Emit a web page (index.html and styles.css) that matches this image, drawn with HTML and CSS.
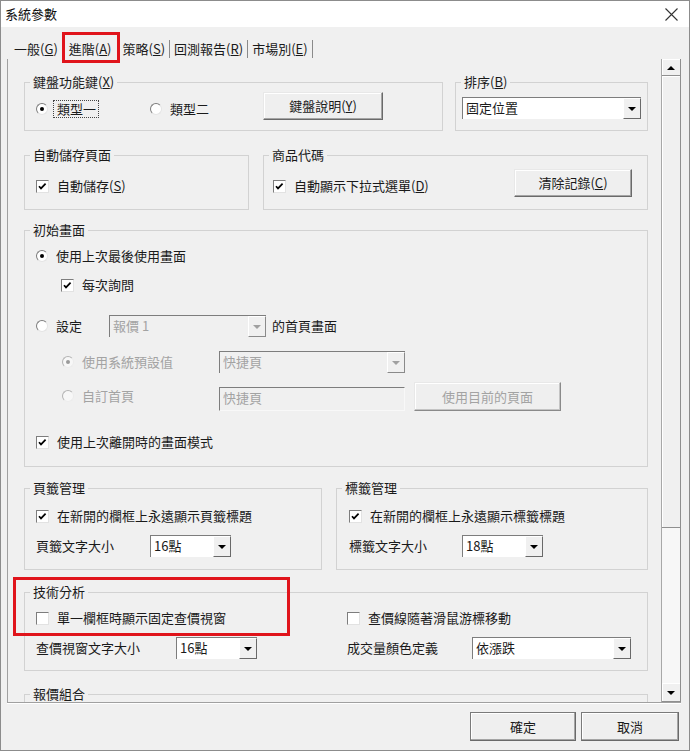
FILE: index.html
```html
<!DOCTYPE html>
<html lang="zh-Hant">
<head>
<meta charset="utf-8">
<title>系統參數</title>
<link rel="stylesheet" href="styles.css">
</head>
<body>
<div class="window">
  <div class="titlebar">
    <span class="title">系統參數</span>
    <svg class="close" width="13" height="13" viewBox="0 0 13 13"><path d="M0.5 0.5L12.5 12.5M12.5 0.5L0.5 12.5"/></svg>
  </div>

  <div class="tabs">
    <span class="tab">一般(<u>G</u>)</span>
    <span class="tab active">進階(<u>A</u>)</span>
    <span class="tab">策略(<u>S</u>)</span>
    <span class="tab">回測報告(<u>R</u>)</span>
    <span class="tab">市場別(<u>E</u>)</span>
  </div>

  <div class="pane">
    <div class="content">
      <div class="row row1">
        <div class="group g1">
          <span class="gtitle">鍵盤功能鍵(<u>X</u>)</span>
          <div class="g1-body">
            <div class="opt o-type1"><span class="rad on"></span><span class="focus">類型一</span></div>
            <div class="opt o-type2"><span class="rad"></span><span>類型二</span></div>
            <div class="btn btn-keys">鍵盤說明(<u>Y</u>)</div>
          </div>
        </div>
        <div class="group g1b">
          <span class="gtitle">排序(<u>B</u>)</span>
          <div class="combo c-sort"><span class="combo-text">固定位置</span><span class="combo-btn"><svg class="tri" width="8" height="4" viewBox="0 0 8 4"><path d="M0 0H8L4 4Z"/></svg></span></div>
        </div>
      </div>

      <div class="row row2">
        <div class="group g2a">
          <span class="gtitle">自動儲存頁面</span>
          <div class="g2a-body">
            <div class="opt"><span class="chk"><svg width="11" height="11" viewBox="0 0 11 11"><path d="M2 5.2L4 7.4L8.6 2.6"/></svg></span><span>自動儲存(<u>S</u>)</span></div>
          </div>
        </div>
        <div class="group g2b">
          <span class="gtitle">商品代碼</span>
          <div class="g2b-body">
            <div class="opt o-auto"><span class="chk"><svg width="11" height="11" viewBox="0 0 11 11"><path d="M2 5.2L4 7.4L8.6 2.6"/></svg></span><span>自動顯示下拉式選單(<u>D</u>)</span></div>
            <div class="btn btn-clear">清除記錄(<u>C</u>)</div>
          </div>
        </div>
      </div>

      <div class="group g3">
        <span class="gtitle">初始畫面</span>
        <div class="g3-body">
          <div class="opt r-a"><span class="rad on"></span><span>使用上次最後使用畫面</span></div>
          <div class="opt c-b"><span class="chk"><svg width="11" height="11" viewBox="0 0 11 11"><path d="M2 5.2L4 7.4L8.6 2.6"/></svg></span><span>每次詢問</span></div>
          <div class="line r-c">
            <div class="opt o-set"><span class="rad"></span><span>設定</span></div>
            <div class="combo dis c-quote"><span class="combo-text">報價 1</span><span class="combo-btn"><svg class="tri" width="8" height="4" viewBox="0 0 8 4"><path d="M0 0H8L4 4Z"/></svg></span></div>
            <span class="after">的首頁畫面</span>
          </div>
          <div class="line r-d">
            <div class="opt dis o-sub"><span class="rad dis on"></span><span>使用系統預設值</span></div>
            <div class="combo dis c-page"><span class="combo-text">快捷頁</span><span class="combo-btn"><svg class="tri" width="8" height="4" viewBox="0 0 8 4"><path d="M0 0H8L4 4Z"/></svg></span></div>
          </div>
          <div class="line r-e">
            <div class="opt dis o-sub o-custom"><span class="rad dis"></span><span>自訂首頁</span></div>
            <div class="input dis">快捷頁</div>
            <div class="btn dis btn-current">使用目前的頁面</div>
          </div>
          <div class="opt c-f"><span class="chk"><svg width="11" height="11" viewBox="0 0 11 11"><path d="M2 5.2L4 7.4L8.6 2.6"/></svg></span><span>使用上次離開時的畫面模式</span></div>
        </div>
      </div>

      <div class="row row4">
        <div class="group g4a">
          <span class="gtitle">頁籤管理</span>
          <div class="g4-body">
            <div class="opt c-top"><span class="chk"><svg width="11" height="11" viewBox="0 0 11 11"><path d="M2 5.2L4 7.4L8.6 2.6"/></svg></span><span>在新開的欄框上永遠顯示頁籤標題</span></div>
            <div class="line size-line">
              <span class="lbl l-size-a">頁籤文字大小</span>
              <div class="combo c-size"><span class="combo-text">16點</span><span class="combo-btn"><svg class="tri" width="8" height="4" viewBox="0 0 8 4"><path d="M0 0H8L4 4Z"/></svg></span></div>
            </div>
          </div>
        </div>
        <div class="group g4b">
          <span class="gtitle">標籤管理</span>
          <div class="g4-body g4b-body">
            <div class="opt c-top"><span class="chk"><svg width="11" height="11" viewBox="0 0 11 11"><path d="M2 5.2L4 7.4L8.6 2.6"/></svg></span><span>在新開的欄框上永遠顯示標籤標題</span></div>
            <div class="line size-line">
              <span class="lbl l-size-b">標籤文字大小</span>
              <div class="combo c-size"><span class="combo-text">18點</span><span class="combo-btn"><svg class="tri" width="8" height="4" viewBox="0 0 8 4"><path d="M0 0H8L4 4Z"/></svg></span></div>
            </div>
          </div>
        </div>
      </div>

      <div class="group g5">
        <span class="gtitle">技術分析</span>
        <div class="g5-body">
          <div class="opt"><span class="chk off"></span><span>單一欄框時顯示固定查價視窗</span></div>
          <div class="opt"><span class="chk off"></span><span>查價線隨著滑鼠游標移動</span></div>
          <div class="line g5-line">
            <span class="lbl l-tech">查價視窗文字大小</span>
            <div class="combo c-size"><span class="combo-text">16點</span><span class="combo-btn"><svg class="tri" width="8" height="4" viewBox="0 0 8 4"><path d="M0 0H8L4 4Z"/></svg></span></div>
          </div>
          <div class="line g5-line">
            <span class="lbl l-vol">成交量顏色定義</span>
            <div class="combo c-vol"><span class="combo-text">依漲跌</span><span class="combo-btn"><svg class="tri" width="8" height="4" viewBox="0 0 8 4"><path d="M0 0H8L4 4Z"/></svg></span></div>
          </div>
        </div>
      </div>

      <div class="group g6">
        <span class="gtitle">報價組合</span>
      </div>
    </div>

    <div class="scrollbar">
      <div class="sb-btn sb-up"><svg class="tri" width="8" height="4" viewBox="0 0 8 4"><path d="M0 4H8L4 0Z"/></svg></div>
      <div class="sb-thumb"></div>
      <div class="sb-track"></div>
      <div class="sb-btn sb-down"><svg class="tri" width="8" height="4" viewBox="0 0 8 4"><path d="M0 0H8L4 4Z"/></svg></div>
    </div>
  </div>

  <div class="footer">
    <div class="btn fbtn btn-ok">確定</div>
    <div class="btn fbtn btn-cancel">取消</div>
  </div>

  <div class="hl hl-tab"></div>
  <div class="hl hl-tech"></div>
</div>
</body>
</html>
```

FILE: styles.css
```css
* { box-sizing: border-box; }
html, body { margin: 0; padding: 0; }
body {
  width: 690px;
  height: 751px;
  background: #f0f0f0;
  font-family: "Noto Sans CJK TC", "Noto Sans CJK SC", "Liberation Sans", sans-serif;
  font-size: 13px;
  color: #1a1a1a;
}
u { text-decoration: underline; text-underline-offset: 1px; }

.window {
  position: relative;
  width: 690px;
  height: 751px;
  border: 1px solid #8c8c8c;
  background: #f0f0f0;
  display: flex;
  flex-direction: column;
  overflow: hidden;
}

/* title bar */
.titlebar {
  height: 26px;
  flex: none;
  background: #fff;
  display: flex;
  align-items: center;
  justify-content: space-between;
  padding: 0 11px 0 4px;
}
.title { line-height: 16px; color: #111; }
.close path { stroke: #333; stroke-width: 1.1; fill: none; }

/* tabs */
.tabs {
  height: 32px;
  flex: none;
  display: flex;
  align-items: flex-end;
  padding: 0 0 1px 9px;
}
.tab {
  height: 18px;
  line-height: 17px;
  padding: 0 4px;
  border-right: 1px solid #8a8a8a;
  white-space: nowrap;
}
.tab.active { padding: 0 6px 0 6px; }

/* pane */
.pane {
  flex: none;
  margin-left: 6px;
  width: 674px;
  height: 644px;
  display: flex;
  border-left: 1px solid #a0a0a0;
  border-bottom: 1px solid #a0a0a0;
  box-shadow: 0 1px 0 #ffffff;
}
.content {
  width: 653px;
  height: 643px;
  overflow: hidden;
  padding: 0 13px 0 16px;
}

/* groups */
.row { display: flex; }
.row1 { gap: 12px; margin-top: 23px; }
.row2 { gap: 14px; margin-top: 24px; }
.row4 { gap: 14px; margin-top: 21px; }
.group { border: 1px solid #d2d2d2; }
.gtitle {
  display: block;
  width: max-content;
  height: 16px;
  line-height: 16px;
  margin: -9px 0 0 5px;
  padding: 0 3px;
  background: #f0f0f0;
  white-space: nowrap;
}
.g1 { width: 419px; height: 49px; }
.g1b { width: 193px; height: 49px; }
.g2a { width: 225px; height: 55px; }
.g2b { width: 385px; height: 55px; }
.g3 { margin-top: 20px; height: 237px; }
.g4a { width: 298px; height: 82px; }
.g4b { width: 312px; height: 82px; }
.g5 { margin-top: 22px; height: 79px; }
.g6 { margin-top: 23px; height: 60px; }

/* option (checkbox / radio with label) */
.opt {
  display: flex;
  align-items: center;
  gap: 8px;
  height: 16px;
  line-height: 16px;
  white-space: nowrap;
}
.opt.dis { color: #a3a3a3; }

.chk {
  width: 13px;
  height: 13px;
  flex: none;
  background: #fff;
  border: 1px solid;
  border-color: #7d7d7d #e2e2e2 #e2e2e2 #7d7d7d;
  display: flex;
  align-items: center;
  justify-content: center;
}
.chk path { fill: none; stroke: #000; stroke-width: 1.7; }

.rad {
  width: 12px;
  height: 12px;
  flex: none;
  border-radius: 50%;
  background: #fff;
  border: 1px solid;
  border-color: #7d7d7d #e4e4e4 #e4e4e4 #7d7d7d;
  display: flex;
  align-items: center;
  justify-content: center;
}
.rad.on::after {
  content: "";
  width: 4px;
  height: 4px;
  border-radius: 50%;
  background: #000;
}
.rad.dis { border-color: #b4b4b4 #ececec #ececec #b4b4b4; background: #f7f7f7; }
.rad.dis.on::after { background: #9a9a9a; }

.focus {
  height: 18px;
  line-height: 16px;
  padding: 0 2px 0 3px;
  border: 1px dotted #444;
}

/* buttons */
.btn {
  display: flex;
  align-items: center;
  justify-content: center;
  background: #efefef;
  border: 1px solid;
  border-color: #e8e8e8 #6a6a6a #6a6a6a #e8e8e8;
  box-shadow: inset -1px -1px 0 #a5a5a5, inset 1px 1px 0 #ffffff;
  white-space: nowrap;
  line-height: 16px;
}
.btn.dis { color: #a3a3a3; border-color: #e8e8e8 #8a8a8a #8a8a8a #e8e8e8; box-shadow: inset -1px -1px 0 #c4c4c4, inset 1px 1px 0 #ffffff; }
.fbtn {
  border-color: #7a7a7a #6a6a6a #6a6a6a #7a7a7a;
  height: 29px;
}

/* combo */
.combo {
  display: flex;
  height: 22px;
  background: #fff;
  border-style: solid;
  border-width: 1px 0 0 1px;
  border-color: #7d7d7d;
  flex: none;
}
.combo-text {
  flex: 1;
  padding-left: 3px;
  line-height: 20px;
  white-space: nowrap;
  overflow: hidden;
}
.combo-btn {
  width: 18px;
  flex: none;
  background: #f0f0f0;
  border: 1px solid;
  border-color: #ffffff #696969 #696969 #ffffff;
  display: flex;
  align-items: center;
  justify-content: center;
}
.tri path { fill: #000; }
.combo.dis { background: #f0f0f0; color: #a3a3a3; }
.combo.dis .combo-btn { border-color: #ffffff #8a8a8a #8a8a8a #ffffff; }
.combo.dis .tri path { fill: #a0a0a0; }

.input {
  height: 24px;
  line-height: 20px;
  padding-left: 3px;
  border-style: solid;
  border-width: 1px;
  border-color: #7d7d7d #f8f8f8 #f8f8f8 #7d7d7d;
  background: #f0f0f0;
}
.input.dis { color: #a3a3a3; }

.line { display: flex; align-items: center; }
.lbl { line-height: 16px; white-space: nowrap; flex: none; }

/* group 1 */
.g1-body { display: flex; align-items: flex-start; padding-left: 11px; }
.o-type1 { width: 114px; height: 18px; margin-top: 10px; gap: 5px; }
.o-type2 { width: 113px; height: 18px; margin-top: 10px; }
.btn-keys { width: 120px; height: 28px; margin-top: 2px; }
.c-sort { width: 179px; margin: 7px 0 0 6px; }

/* group 2 */
.g2a-body { padding: 15px 0 0 11px; }
.g2b-body { display: flex; align-items: flex-start; padding: 6px 15px 0 9px; }
.o-auto { margin-top: 9px; }
.btn-clear { width: 118px; height: 28px; margin-left: auto; }

/* group 3 */
.g3-body { padding-left: 11px; }
.r-a { margin-top: 10px; }
.c-b { margin-top: 13px; margin-left: 25px; }
.r-c { margin-top: 22px; height: 22px; }
.o-set { width: 73px; }
.c-quote { width: 157px; }
.after { margin-left: 6px; line-height: 16px; }
.r-d { margin-top: 14px; height: 22px; }
.o-sub { width: 157px; margin-left: 26px; }
.c-page { width: 186px; }
.r-e { margin-top: 9px; height: 29px; align-items: flex-start; }
.o-custom { margin-top: 6px; }
.input { width: 186px; margin-top: 5px; }
.btn-current { width: 147px; height: 29px; margin-left: 9px; }
.c-f { margin-top: 23px; }

/* group 4 */
.g4-body { padding-left: 11px; }
.g4b-body { padding-left: 12px; }
.c-top { margin-top: 12px; }
.size-line { margin-top: 11px; }
.l-size-a { width: 114px; }
.l-size-b { width: 113px; }
.c-size { width: 81px; }

/* group 5 */
.g5-body {
  display: grid;
  grid-template-columns: 311px 1fr;
  grid-template-rows: 16px 22px;
  row-gap: 11px;
  padding: 10px 0 0 11px;
}
.l-tech { width: 140px; }
.l-vol { width: 125px; }
.c-vol { width: 159px; }

/* scrollbar */
.scrollbar {
  width: 20px;
  flex: none;
  display: flex;
  flex-direction: column;
  border-left: 1px solid #a8a8a8;
  border-right: 1px solid #8f8f8f;
}
.sb-btn {
  display: flex;
  align-items: center;
  justify-content: center;
  background: #f0f0f0;
  border-top: 1px solid #ffffff;
  border-bottom: 1px solid #8f8f8f;
  box-shadow: inset 1px 0 0 #ffffff;
}
.sb-up { height: 17px; }
.sb-down { height: 19px; }
.sb-thumb {
  height: 452px;
  background: #f0f0f0;
  border-top: 1px solid #ffffff;
  border-bottom: 1px solid #8f8f8f;
  box-shadow: inset 1px 0 0 #ffffff;
}
.sb-track { flex: 1; background: #f7f7f7; }

/* footer */
.footer {
  flex: 1;
  display: flex;
  justify-content: flex-end;
  align-items: flex-start;
  gap: 5px;
  padding: 9px 10px 0 0;
}
.btn-ok { width: 106px; }
.btn-cancel { width: 98px; }

/* red highlight overlays */
.hl {
  position: absolute;
  border: 3px solid #e0141b;
  pointer-events: none;
}
.hl-tab { left: 61px; top: 31px; width: 58px; height: 31px; }
.hl-tech { left: 12px; top: 576px; width: 277px; height: 59px; }
```
